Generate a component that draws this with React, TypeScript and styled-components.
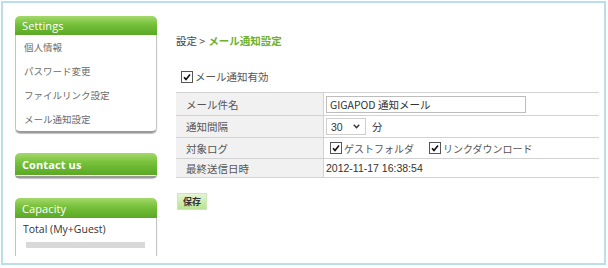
import React from "react";
import styled, { createGlobalStyle } from "styled-components";

const GlobalStyle = createGlobalStyle`
  html, body {
    margin: 0;
    padding: 0;
    background: #ffffff;
  }
  body {
    font-family: "Noto Sans CJK JP", "Liberation Sans", sans-serif;
    color: #555555;
  }
`;

const Frame = styled.div`
  box-sizing: border-box;
  margin: 1px 0 0 1px;
  width: 605px;
  height: 264px;
  border: 2px solid #b9dfeb;
  padding: 13px 5px 0 12px;
  overflow: hidden;
`;

const Layout = styled.div`
  display: flex;
  height: 240px;
  overflow: hidden;
`;

const Sidebar = styled.div`
  width: 142px;
  flex-shrink: 0;
  display: flex;
  flex-direction: column;
  gap: 20px;
`;

const Panel = styled.div`
  background: #ffffff;
  border-radius: 5px;
  box-shadow: 0 1px 1px rgba(0, 0, 0, 0.25);
`;

const PanelHeader = styled.div<{ $h: number; $bold?: boolean }>`
  height: ${(p) => p.$h}px;
  display: flex;
  align-items: center;
  padding-left: 7px;
  border-radius: 5px 5px 0 0;
  background: linear-gradient(#a3d96a 0%, #76c03a 45%, #5aa825 100%);
  color: #ffffff;
  font-family: "Open Sans", "Liberation Sans", sans-serif;
  font-size: 11px;
  font-weight: ${(p) => (p.$bold ? 700 : 400)};
  letter-spacing: 0.1px;
`;

const PanelBody = styled.div<{ $closed?: boolean }>`
  border: 1px solid #c4c4c4;
  border-top: none;
  border-bottom: ${(p) => (p.$closed ? "2px solid #9a9a9a" : "1px solid #c4c4c4")};
  border-radius: 0 0 5px 5px;
  min-height: 1px;
`;

const MenuItem = styled.div`
  height: 24px;
  display: flex;
  align-items: center;
  padding-left: 8px;
  font-size: 9.5px;
  color: #6a6a6a;
`;

const CapacityLabel = styled.div`
  padding: 4px 0 0 7px;
  font-family: "Open Sans", "Liberation Sans", sans-serif;
  font-size: 10.5px;
  color: #333333;
`;

const CapacityBar = styled.div`
  margin: 6px 11px 12px 10px;
  height: 6px;
  background: #d9d9d9;
`;

const Main = styled.div`
  flex: 1;
  margin-left: 19px;
  display: flex;
  flex-direction: column;
`;

const Breadcrumb = styled.div`
  margin-top: 17px;
  font-size: 10.5px;
  color: #444444;
  display: flex;
  gap: 3px;
`;

const Current = styled.span`
  color: #6fb02c;
  font-weight: 700;
`;

const CheckLine = styled.label`
  display: flex;
  align-items: center;
  gap: 2px;
  font-size: 10px;
  color: #555555;
`;

const EnableLine = styled(CheckLine)`
  margin: 21px 0 8px 5px;
  font-size: 10.5px;
`;

const Box = styled.span`
  width: 10px;
  height: 10px;
  border: 1px solid #555555;
  background: #ffffff;
  display: inline-flex;
  align-items: center;
  justify-content: center;
`;

const Table = styled.div`
  border-top: 1px solid #d2d2d2;
`;

const Row = styled.div<{ $h: number }>`
  display: flex;
  height: ${(p) => p.$h}px;
  border-bottom: 1px solid #d2d2d2;
`;

const LabelCell = styled.div`
  width: 137px;
  flex-shrink: 0;
  background: #f1f1f1;
  border-right: 1px solid #d2d2d2;
  display: flex;
  align-items: center;
  padding-left: 10px;
  font-size: 10.5px;
  color: #555555;
`;

const ValueCell = styled.div<{ $gap?: number }>`
  flex: 1;
  display: flex;
  align-items: center;
  gap: ${(p) => p.$gap ?? 8}px;
  padding-left: 2px;
  font-size: 10.5px;
  color: #333333;
`;

const TextInput = styled.div`
  box-sizing: border-box;
  width: 200px;
  height: 17px;
  border: 1px solid #bdbdbd;
  display: flex;
  align-items: center;
  padding-left: 3px;
  font-size: 10.5px;
  color: #333333;
`;

const Select = styled.div`
  box-sizing: border-box;
  width: 40px;
  height: 17px;
  border: 1px solid #cfcfcf;
  display: flex;
  align-items: center;
  justify-content: space-between;
  padding: 0 5px 0 4px;
  font-family: "Liberation Sans", sans-serif;
  font-size: 10.5px;
  color: #333333;
`;

const Checks = styled.div`
  display: flex;
  gap: 15px;
  padding-left: 4px;
`;

const DateText = styled.span`
  font-family: "Liberation Sans", sans-serif;
  font-size: 10.5px;
  color: #333333;
`;

const SaveButton = styled.button`
  align-self: flex-start;
  margin: 15px 0 0 1px;
  width: 30px;
  height: 17px;
  padding: 0;
  border: 1px solid #cfe6b8;
  background: linear-gradient(#e4f5d4, #b9e292);
  font-family: "Noto Sans CJK JP", sans-serif;
  font-size: 9px;
  font-weight: 700;
  color: #333333;
`;

const Tick = () => (
  <svg width="8" height="8" viewBox="0 0 8 8">
    <path d="M1 4.2 L3 6.4 L7 1.4" fill="none" stroke="#111" strokeWidth="1.6" />
  </svg>
);

const Check: React.FC<{ label: string }> = ({ label }) => (
  <CheckLine>
    <Box>
      <Tick />
    </Box>
    <span>{label}</span>
  </CheckLine>
);

const Chevron = () => (
  <svg width="7" height="5" viewBox="0 0 7 5">
    <path d="M0.8 0.8 L3.5 3.8 L6.2 0.8" fill="none" stroke="#333" strokeWidth="1.4" />
  </svg>
);

const menu = ["個人情報", "パスワード変更", "ファイルリンク設定", "メール通知設定"];

export default function App() {
  return (
    <>
      <GlobalStyle />
      <Frame>
        <Layout>
          <Sidebar>
            <Panel>
              <PanelHeader $h={19}>Settings</PanelHeader>
              <PanelBody $closed>
                {menu.map((m) => (
                  <MenuItem key={m}>{m}</MenuItem>
                ))}
              </PanelBody>
            </Panel>
            <Panel>
              <PanelHeader $h={22} $bold>
                Contact us
              </PanelHeader>
              <PanelBody $closed />
            </Panel>
            <Panel>
              <PanelHeader $h={20}>Capacity</PanelHeader>
              <PanelBody>
                <CapacityLabel>Total (My+Guest)</CapacityLabel>
                <CapacityBar />
              </PanelBody>
            </Panel>
          </Sidebar>
          <Main>
            <Breadcrumb>
              <span>設定 &gt;</span>
              <Current>メール通知設定</Current>
            </Breadcrumb>
            <EnableLine>
              <Box>
                <Tick />
              </Box>
              <span>メール通知有効</span>
            </EnableLine>
            <Table>
              <Row $h={22}>
                <LabelCell>メール件名</LabelCell>
                <ValueCell>
                  <TextInput>GIGAPOD 通知メール</TextInput>
                </ValueCell>
              </Row>
              <Row $h={21}>
                <LabelCell>通知間隔</LabelCell>
                <ValueCell $gap={6}>
                  <Select>
                    <span>30</span>
                    <Chevron />
                  </Select>
                  <span>分</span>
                </ValueCell>
              </Row>
              <Row $h={20}>
                <LabelCell>対象ログ</LabelCell>
                <ValueCell>
                  <Checks>
                    <Check label="ゲストフォルダ" />
                    <Check label="リンクダウンロード" />
                  </Checks>
                </ValueCell>
              </Row>
              <Row $h={18}>
                <LabelCell>最終送信日時</LabelCell>
                <ValueCell>
                  <DateText>2012-11-17 16:38:54</DateText>
                </ValueCell>
              </Row>
            </Table>
            <SaveButton>保存</SaveButton>
          </Main>
        </Layout>
      </Frame>
    </>
  );
}
